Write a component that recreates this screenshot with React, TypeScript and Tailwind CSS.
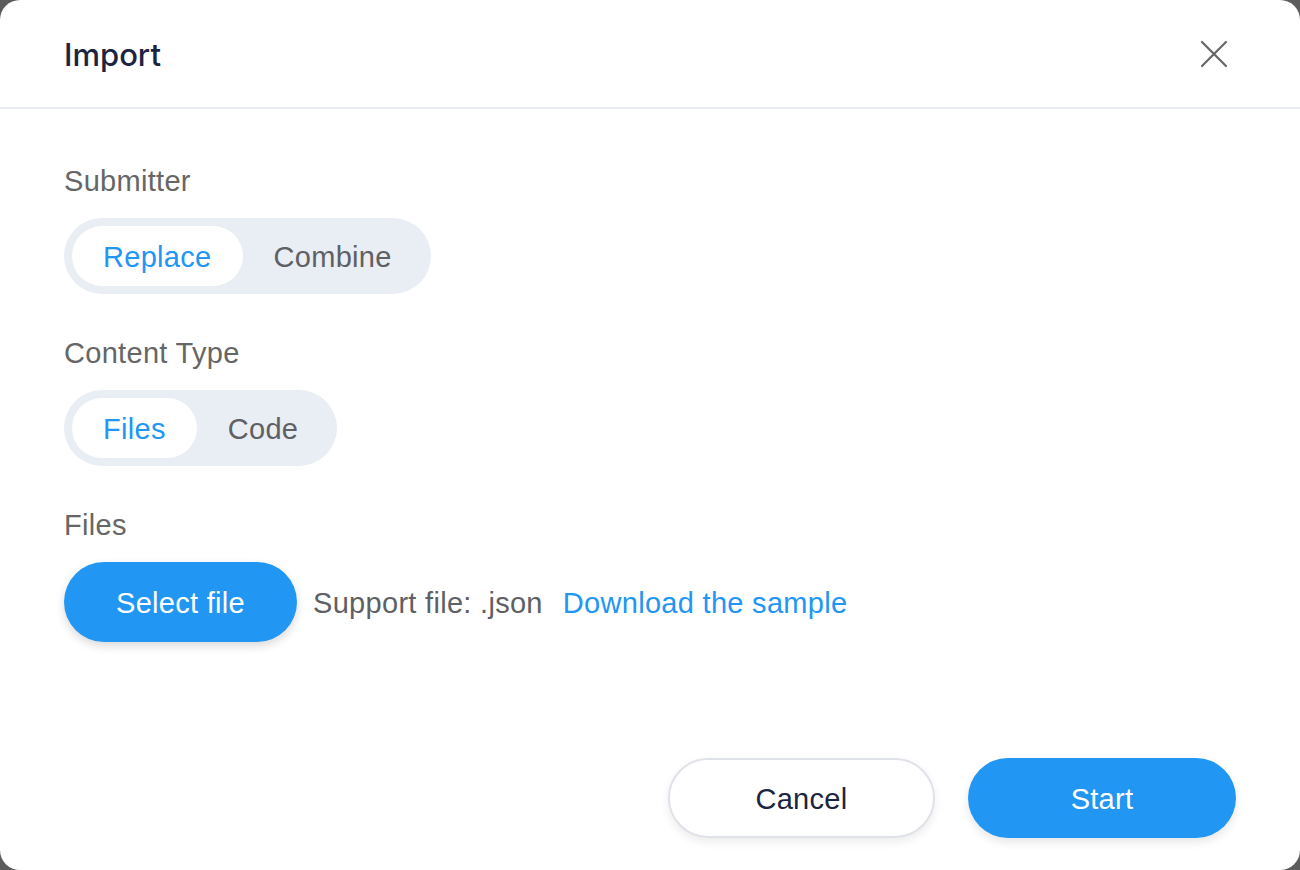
import { useState } from 'react';

const font = { fontFamily: '"Liberation Sans", Arial, sans-serif' };

function Segmented({ options, value, onChange }: { options: string[]; value: string; onChange: (v: string) => void }) {
  return (
    <div className="inline-flex rounded-full bg-[#e9edf4] p-2">
      {options.map((o) => (
        <button
          key={o}
          onClick={() => onChange(o)}
          className={
            o === value
              ? 'h-[60px] rounded-full bg-white px-[31px] pt-1 text-[29px] tracking-[0.3px] text-[#2196f3]'
              : 'h-[60px] rounded-full px-[31px] pt-1 text-[29px] tracking-[0.3px] text-[#5f6063]'
          }
        >
          {o}
        </button>
      ))}
    </div>
  );
}

export default function App() {
  const [submitter, setSubmitter] = useState('Replace');
  const [contentType, setContentType] = useState('Files');

  return (
    <div className="h-[870px] w-[1300px] bg-[#5c5c5c]" style={font}>
      <div className="flex h-full w-full flex-col overflow-hidden rounded-[20px] bg-white">
        {/* header */}
        <div className="flex h-[109px] shrink-0 items-center justify-between border-b-2 border-[#eaeef4] pl-16 pr-[72px]">
          <h1 className="pt-1 font-['Inter'] text-[31px] font-medium text-[#1b2541]">Import</h1>
          <button className="text-[#666]">
            <svg width="28" height="28" viewBox="0 0 28 28" fill="none" stroke="currentColor" strokeWidth="2.2" strokeLinecap="round">
              <path d="M2 2L26 26M26 2L2 26" />
            </svg>
          </button>
        </div>

        {/* body */}
        <div className="flex flex-col px-16 pt-[52px] text-[29px] tracking-[0.3px]">
          <div className="leading-[40px] text-[#666]">Submitter</div>
          <div className="mt-[17px]">
            <Segmented options={['Replace', 'Combine']} value={submitter} onChange={setSubmitter} />
          </div>

          <div className="mt-[39px] leading-[40px] text-[#666]">Content Type</div>
          <div className="mt-[17px]">
            <Segmented options={['Files', 'Code']} value={contentType} onChange={setContentType} />
          </div>

          <div className="mt-[39px] leading-[40px] text-[#666]">Files</div>
          <div className="mt-[17px] flex items-center gap-4 pt-0">
            <button className="h-[80px] rounded-full bg-[#2196f3] px-[52px] pt-1 text-white shadow-[0_4px_10px_rgba(0,0,0,0.15)]">
              Select file
            </button>
            <span className="pt-1 text-[#5f6063]">Support file: .json</span>
            <a className="pl-1 pt-1 text-[#2196f3]">Download the sample</a>
          </div>
        </div>

        {/* footer */}
        <div className="mt-auto flex justify-end gap-[33px] px-16 pb-8 text-[29px] tracking-[0.3px]">
          <button className="h-[80px] w-[267px] rounded-full border-2 border-[#dfe2e8] bg-white pt-1 text-[#1b2541] shadow-[0_4px_10px_rgba(0,0,0,0.08)]">
            Cancel
          </button>
          <button className="h-[80px] w-[268px] rounded-full bg-[#2196f3] pt-1 text-white shadow-[0_4px_10px_rgba(0,0,0,0.1)]">
            Start
          </button>
        </div>
      </div>
    </div>
  );
}
